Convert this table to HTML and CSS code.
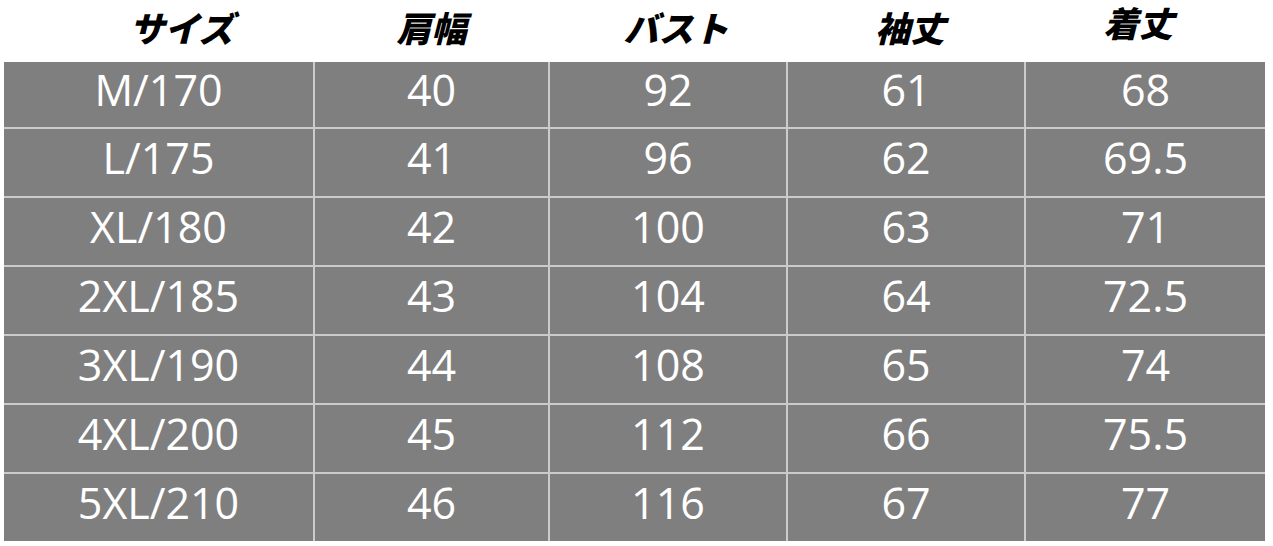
FILE: index.html
```html
<!DOCTYPE html>
<html lang="ja">
<head>
<meta charset="utf-8">
<title>サイズ表</title>
<link rel="stylesheet" href="styles.css">
</head>
<body>
<div class="chart">
  <div class="head">
    <div class="hcell h-size">サイズ</div>
    <div class="hcell">肩幅</div>
    <div class="hcell h-bust">バスト</div>
    <div class="hcell h-sleeve">袖丈</div>
    <div class="hcell h-length">着丈</div>
  </div>
  <div class="grid">
    <div class="cell">M/170</div><div class="cell">40</div><div class="cell">92</div><div class="cell">61</div><div class="cell">68</div>
    <div class="cell">L/175</div><div class="cell">41</div><div class="cell">96</div><div class="cell">62</div><div class="cell">69.5</div>
    <div class="cell">XL/180</div><div class="cell">42</div><div class="cell">100</div><div class="cell">63</div><div class="cell">71</div>
    <div class="cell">2XL/185</div><div class="cell">43</div><div class="cell">104</div><div class="cell">64</div><div class="cell">72.5</div>
    <div class="cell">3XL/190</div><div class="cell">44</div><div class="cell">108</div><div class="cell">65</div><div class="cell">74</div>
    <div class="cell">4XL/200</div><div class="cell">45</div><div class="cell">112</div><div class="cell">66</div><div class="cell">75.5</div>
    <div class="cell">5XL/210</div><div class="cell">46</div><div class="cell">116</div><div class="cell">67</div><div class="cell">77</div>
  </div>
</div>
</body>
</html>
```

FILE: styles.css
```css
html, body {
  margin: 0;
  padding: 0;
  background: #ffffff;
}

.chart {
  width: 1273px;
  height: 546px;
  padding-left: 4px;
  box-sizing: border-box;
}

.head {
  display: grid;
  grid-template-columns: 309px 233px 236px 236px 239px;
  column-gap: 2px;
  height: 62px;
}

.hcell {
  font-family: "Noto Sans CJK JP", sans-serif;
  font-weight: 900;
  font-style: italic;
  font-size: 35px;
  line-height: 44px;
  color: #000000;
  text-align: center;
  padding-top: 5px;
}

.h-size { padding-left: 46px; }
.h-bust { padding-left: 16px; }
.h-sleeve { padding-left: 8px; }
.h-length { line-height: 38px; padding-top: 3px; padding-right: 14px; }

.grid {
  display: grid;
  grid-template-columns: 309px 233px 236px 236px 239px;
  grid-template-rows: 65px repeat(6, 67px);
  gap: 2px;
  width: 1261px;
  background: #cbcbcb;
}

.cell {
  background: #7f7f7f;
  color: #ffffff;
  font-family: "Open Sans", "Noto Sans", sans-serif;
  font-size: 43px;
  display: flex;
  align-items: center;
  justify-content: center;
  padding-bottom: 10px;
  box-sizing: border-box;
}
```
